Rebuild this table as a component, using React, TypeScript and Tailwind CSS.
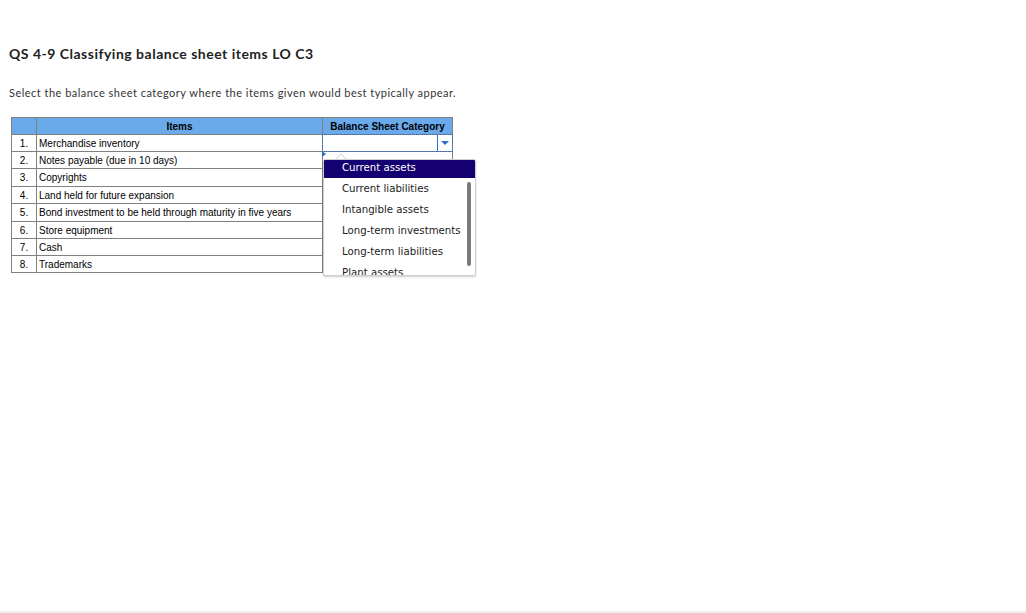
import React from "react";

const items = [
  "Merchandise inventory",
  "Notes payable (due in 10 days)",
  "Copyrights",
  "Land held for future expansion",
  "Bond investment to be held through maturity in five years",
  "Store equipment",
  "Cash",
  "Trademarks",
];
const heights = ["h-[17px]", "h-[17px]", "h-[18px]", "h-[17px]", "h-[18px]", "h-[17px]", "h-[17px]", "h-[17px]"];

const options = [
  "Current assets",
  "Current liabilities",
  "Intangible assets",
  "Long-term investments",
  "Long-term liabilities",
  "Plant assets",
];

export default function App() {
  return (
    <div className="relative w-[1026px] h-[613px] bg-white overflow-hidden">
      <div className="pl-[9px] pt-[45px]">
        <h1 className="text-[14px] leading-[18px] font-bold text-[#222] font-['Lato',sans-serif] tracking-[0.5px]">
          QS 4-9 Classifying balance sheet items LO C3
        </h1>
        <p className="mt-[23px] text-[11px] leading-[14px] text-[#333] font-['Lato',sans-serif] tracking-[0.48px]">
          Select the balance sheet category where the items given would best typically appear.
        </p>
      </div>
      <div className="pl-[11px] pt-[17px]">
        <table className="border-collapse font-['Liberation_Sans',Arial,sans-serif] text-[10px] text-black">
          <thead>
            <tr className="h-[17px] bg-[#6aaaea]">
              <th className="w-[25px] border border-[#808080] p-0"></th>
              <th className="w-[286px] border border-[#808080] p-0 font-bold text-center">Items</th>
              <th className="w-[130px] border border-[#808080] p-0 font-bold text-center">Balance Sheet Category</th>
            </tr>
          </thead>
          <tbody>
            {items.map((it, i) => (
              <tr key={i} className={heights[i]}>
                <td className="border border-[#808080] p-0 text-center">{i + 1}.</td>
                <td className="border border-[#808080] p-0 pl-[2px] text-left">{it}</td>
                <td className="border border-[#808080] p-0 relative">
                  {i === 0 && (
                    <div className="absolute inset-[-1px] border border-dotted border-[#2a6fd0] flex justify-end">
                      <div className="w-[15px] border-l border-[#2a6fd0] flex items-center justify-center">
                        <svg width="8" height="5" viewBox="0 0 8 5">
                          <polygon points="0,0 8,0 4,4" fill="#2a6fd0" />
                        </svg>
                      </div>
                    </div>
                  )}
                </td>
              </tr>
            ))}
          </tbody>
        </table>
      </div>

      {/* dropdown popup */}
      <svg className="absolute left-[322px] top-[151px]" width="5" height="6" viewBox="0 0 5 6">
        <polygon points="0,0 4,3 0,6" fill="#2a6fd0" />
      </svg>
      <div className="absolute left-[337px] top-[155px] w-[8px] h-[8px] rotate-45 bg-white border-l border-t border-[#dcdcdc]" />
      <div className="absolute left-[323px] top-[159px] w-[153px] h-[117px] bg-white border border-[#cfcfcf] rounded-[2px] shadow-[0_1px_2px_rgba(0,0,0,0.2)] overflow-hidden font-['DejaVu_Sans',Verdana,sans-serif] text-[10.2px]">
        <div className="-mt-[3px]">
          {options.map((o, i) => (
            <div
              key={o}
              className={`h-[21px] flex items-center pl-[18px] whitespace-nowrap ${
                i === 0 ? "bg-[#140070] text-white" : "text-[#222]"
              }`}
            >
              {o}
            </div>
          ))}
        </div>
        <div className="absolute right-[4px] top-[22px] w-[4px] h-[84px] rounded-full bg-[#7a7a7a]" />
      </div>

      <div className="absolute left-0 right-0 bottom-0 h-[2px] bg-[#eef0f2]" />
    </div>
  );
}
